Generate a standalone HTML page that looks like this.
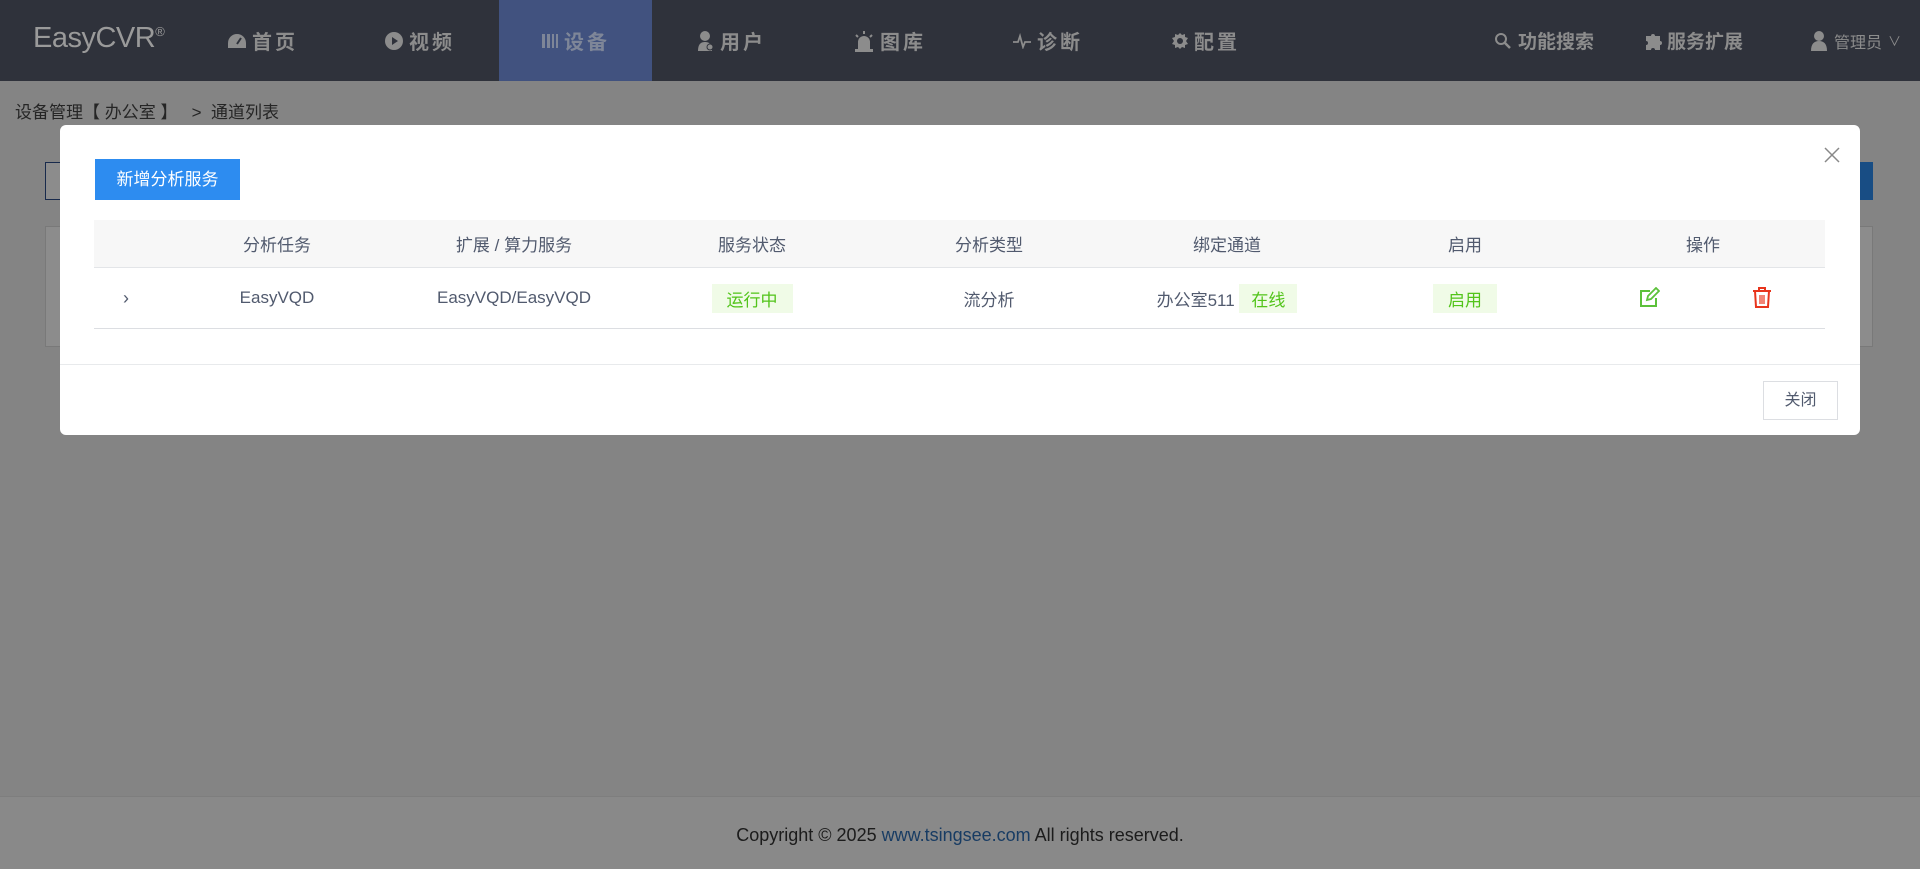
<!DOCTYPE html>
<html style="background:#878787;overflow:hidden;height:869px"><head><meta charset="utf-8"><style>
*{margin:0;padding:0;box-sizing:border-box}
body{width:1920px;height:869px;overflow:hidden;background:#f0f0f0;font-family:"Liberation Sans","Noto Sans CJK SC",sans-serif;position:relative}
.hdr{position:absolute;left:0;top:0;width:1920px;height:81px;background:#2f323b}
.logo{position:absolute;left:33px;top:22px;color:#9a9a9a;font-size:29px;letter-spacing:-0.5px}
.logo sup{font-size:13px;vertical-align:top;position:relative;top:2px}
.nav{position:absolute;top:0;height:81px;width:153px;display:flex;align-items:center;justify-content:center;color:#8c8c8c;font-weight:bold;font-size:20px;letter-spacing:3px}
.nav.act{background:#41527f;color:#7e8698}
.nav svg{margin-right:5px}
.rt{position:absolute;top:0;height:81px;display:flex;align-items:center;color:#8c8c8c;font-weight:bold;font-size:19px}
.bc{position:absolute;left:15px;top:98px;font-size:17px;color:#444}
.overlay{position:absolute;left:0;top:81px;width:1920px;height:800px;background:rgba(0,0,0,.45)}
.foot{position:absolute;left:0;top:796px;width:1920px;height:80px;background:#fafafa;border-top:1px solid #e5e5e5;text-align:center;padding-top:28px;font-size:18px;color:#333}
.foot a{color:#2d6db5;text-decoration:none}
.modal{position:absolute;left:60px;top:125px;width:1800px;height:310px;background:#fff;border-radius:6px}
.btn{position:absolute;left:35px;top:34px;width:145px;height:41px;background:#2d8cf0;color:#fff;font-size:17px;text-align:center;line-height:41px}
.tbl{position:absolute;left:34px;top:95px;width:1731px}
.th{height:48px;background:#f7f7f7;border-bottom:1px solid #e3e5e8;position:relative}
.tr{height:61px;border-bottom:1px solid #dcdee2;position:relative}
.c{position:absolute;top:0;height:100%;display:flex;align-items:center;justify-content:center;font-size:17px;color:#515a6e;width:238px}
.tag{background:#f0fbe7;color:#52c41a;padding:2px 15px}
.mf{position:absolute;left:0;top:239px;width:1800px;border-top:1px solid #e8eaec}
.close{position:absolute;left:1703px;top:256px;width:75px;height:39px;border:1px solid #dcdee2;font-size:16px;color:#515a6e;text-align:center;line-height:37px}
</style></head><body>
<div class="hdr">
<div class="logo">EasyCVR<sup>®</sup></div>
<div class="nav" style="left:186px"><svg width="20" height="16" viewBox="0 0 20 16"><path d="M10 1A9 9 0 0 0 1 10v5h18v-5A9 9 0 0 0 10 1z" fill="#8c8c8c"/><path d="M10 11l4-6" stroke="#2f323b" stroke-width="2"/></svg>首页</div>
<div class="nav" style="left:343px"><svg width="20" height="20"><circle cx="10" cy="10" r="9" fill="#8c8c8c"/><path d="M8 6l6 4-6 4z" fill="#2f323b"/></svg>视频</div>
<div class="nav act" style="left:499px"><svg width="18" height="16"><rect x="1" y="1" width="3" height="14" fill="#7e8698"/><rect x="6" y="1" width="3" height="14" fill="#7e8698"/><rect x="11" y="1" width="2" height="14" fill="#7e8698"/><rect x="15" y="1" width="2" height="14" fill="#7e8698"/></svg>设备</div>
<div class="nav" style="left:655px"><svg width="18" height="22"><circle cx="8" cy="6" r="5" fill="#8c8c8c"/><path d="M1 21c0-7 3-9 7-9s7 2 7 9z" fill="#8c8c8c"/><circle cx="13" cy="17" r="3" fill="#8c8c8c" stroke="#2f323b"/></svg>用户</div>
<div class="nav" style="left:813px"><svg width="22" height="22"><path d="M5 20v-8a6 6 0 0 1 12 0v8z" fill="#8c8c8c"/><rect x="2" y="19" width="18" height="3" fill="#8c8c8c"/><path d="M11 1v3M3 5l2 2M19 5l-2 2" stroke="#8c8c8c" stroke-width="2"/></svg>图库</div>
<div class="nav" style="left:971px"><svg width="20" height="16"><path d="M1 9h5l2-6 3 11 2-5h6" stroke="#8c8c8c" stroke-width="1.8" fill="none"/></svg>诊断</div>
<div class="nav" style="left:1129px"><svg width="18" height="18" viewBox="0 0 18 18"><path d="M9 1l2 2 3-1 0 3 3 1-2 3 2 3-3 1 0 3-3-1-2 2-2-2-3 1 0-3-3-1 2-3-2-3 3-1 0-3 3 1z" fill="#8c8c8c"/><circle cx="9" cy="9" r="3" fill="#2f323b"/></svg>配置</div>
<div class="rt" style="left:1494px"><svg width="18" height="18" style="margin-right:6px"><circle cx="7" cy="7" r="5" stroke="#8c8c8c" stroke-width="2" fill="none"/><path d="M11 11l5 5" stroke="#8c8c8c" stroke-width="2.5"/></svg>功能搜索</div>
<div class="rt" style="left:1643px"><svg width="20" height="20" style="margin-right:4px"><path d="M3 5h5a2 2 0 1 1 4 0h5v5a2 2 0 1 1 0 4v5h-5a2 2 0 1 0-4 0H3v-5a2 2 0 1 0 0-4z" fill="#8c8c8c"/></svg>服务扩展</div>
<div class="rt" style="left:1810px;font-weight:normal;font-size:16px"><svg width="18" height="22" style="margin-right:6px"><circle cx="9" cy="6" r="5" fill="#8c8c8c"/><path d="M1 21c0-7 3-10 8-10s8 3 8 10z" fill="#8c8c8c"/></svg>管理员 <span style="margin-left:6px;font-size:13px">∨</span></div>
</div>
<div class="bc">设备管理【 办公室 】 &nbsp; &gt; &nbsp;通道列表</div>
<div style="position:absolute;left:45px;top:162px;width:40px;height:38px;border:1px solid #2d4d8a;background:#fff"></div>
<div style="position:absolute;left:1830px;top:162px;width:43px;height:38px;background:#2d8cf0"></div>
<div style="position:absolute;left:45px;top:226px;width:1828px;height:121px;border:1px solid #ddd;background:#fff"></div>
<div class="foot">Copyright © 2025 <a>www.tsingsee.com</a> All rights reserved.</div>
<div class="overlay"></div>
<div class="modal">
<svg style="position:absolute;left:1764px;top:22px" width="16" height="16"><path d="M1 1l14 14M15 1L1 15" stroke="#888" stroke-width="1.5"/></svg>
<div class="btn">新增分析服务</div>
<div class="tbl">
<div class="th">
<div class="c" style="left:64px">分析任务</div><div class="c" style="left:301px">扩展 / 算力服务</div><div class="c" style="left:539px">服务状态</div><div class="c" style="left:776px">分析类型</div><div class="c" style="left:1014px">绑定通道</div><div class="c" style="left:1252px">启用</div><div class="c" style="left:1490px">操作</div>
</div>
<div class="tr">
<div class="c" style="left:0;width:64px;font-size:18px">›</div>
<div class="c" style="left:64px">EasyVQD</div><div class="c" style="left:301px">EasyVQD/EasyVQD</div><div class="c" style="left:539px"><span class="tag">运行中</span></div><div class="c" style="left:776px">流分析</div><div class="c" style="left:1014px">办公室511&nbsp;<span class="tag" style="padding:2px 12px">在线</span></div><div class="c" style="left:1252px"><span class="tag" style="padding:2px 15px">启用</span></div>
<svg style="position:absolute;left:1544px;top:19px" width="22" height="22"><path d="M12 4H3v15h15v-8" stroke="#5cc13a" stroke-width="2" fill="none"/><path d="M9 13l1-4 8-8 3 3-8 8z" stroke="#5cc13a" stroke-width="1.8" fill="none"/></svg>
<svg style="position:absolute;left:1658px;top:18px" width="20" height="22"><path d="M1 5h18M7 5V2h6v3M3 5l1 16h12l1-16" stroke="#e8341c" stroke-width="2" fill="none"/><path d="M8 9v9M10 9v9M12 9v9" stroke="#e8341c" stroke-width="1.2"/></svg>
</div>
</div>
<div class="mf"></div>
<div class="close">关闭</div>
</div>
</body></html>
